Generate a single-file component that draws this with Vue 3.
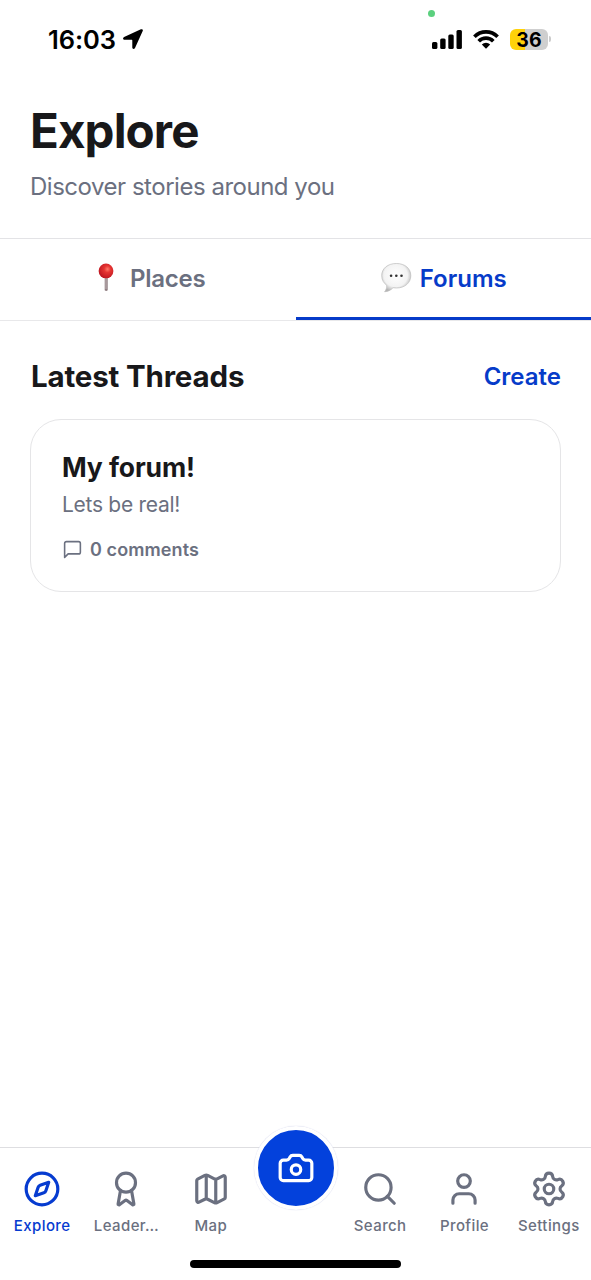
<script setup>
const left = [
  {
    label: 'Explore',
    active: true,
    circle: [12, 12, 10],
    path: 'm16.24 7.76-1.804 5.411a2 2 0 0 1-1.265 1.265L7.76 16.24l1.804-5.411a2 2 0 0 1 1.265-1.265z',
  },
  {
    label: 'Leader…',
    circle: [12, 8, 6],
    path: 'm15.477 12.89 1.515 8.526a.5.5 0 0 1-.81.47l-3.58-2.687a1 1 0 0 0-1.197 0l-3.586 2.686a.5.5 0 0 1-.81-.469l1.514-8.526',
  },
  {
    label: 'Map',
    path: 'M14.106 5.553a2 2 0 0 0 1.788 0l3.659-1.83A1 1 0 0 1 21 4.619v12.764a1 1 0 0 1-.553.894l-4.553 2.277a2 2 0 0 1-1.788 0l-4.212-2.106a2 2 0 0 0-1.788 0l-3.659 1.83A1 1 0 0 1 3 19.381V6.618a1 1 0 0 1 .553-.894l4.553-2.277a2 2 0 0 1 1.788 0zM15 5.764v15M9 3.236v15',
  },
]
const right = [
  { label: 'Search', circle: [11, 11, 8], path: 'm21 21-4.34-4.34' },
  { label: 'Profile', circle: [12, 7, 4], path: 'M19 21v-2a4 4 0 0 0-4-4H9a4 4 0 0 0-4 4v2' },
  {
    label: 'Settings',
    circle: [12, 12, 3],
    path: 'M9.671 4.136a2.34 2.34 0 0 1 4.659 0 2.34 2.34 0 0 0 3.319 1.915 2.34 2.34 0 0 1 2.33 4.033 2.34 2.34 0 0 0 0 3.831 2.34 2.34 0 0 1-2.33 4.033 2.34 2.34 0 0 0-3.319 1.915 2.34 2.34 0 0 1-4.659 0 2.34 2.34 0 0 0-3.32-1.915 2.34 2.34 0 0 1-2.33-4.033 2.34 2.34 0 0 0 0-3.831A2.34 2.34 0 0 1 6.35 6.051a2.34 2.34 0 0 0 3.319-1.915',
  },
]
const tabs = [...left, { camera: true, label: 'camera' }, ...right]
</script>

<template>
  <div class="screen">
    <div class="status">
      <i class="privacy-dot"></i>
      <span class="time">16:03</span>
      <svg class="location" width="20" height="20" viewBox="0 0 20 20">
        <path d="M17.900.3 1.100 8C-.5 8.800-.2 10.700 1.500 10.700h7.300c.3 0 .5.200.5.500v7.300c0 1.700 1.900 2 2.700.4L19.700 2.100C20.300.8 19.200-.3 17.900.3z" />
      </svg>
      <svg class="signal" width="30" height="19" viewBox="0 0 30 19">
        <rect x="0" y="12" width="5.400" height="7" rx="1.500" />
        <rect x="8.200" y="8.500" width="5.400" height="10.500" rx="1.500" />
        <rect x="16.300" y="4.500" width="5.400" height="14.500" rx="1.500" />
        <rect x="24.500" y="0" width="5.400" height="19" rx="1.500" />
      </svg>
      <svg class="wifi" width="26" height="19" viewBox="0 0 26 19">
        <g fill="none" stroke="#000" stroke-width="3.700">
          <path d="M1.400 6.700a16.500 16.500 0 0 1 23.200 0" />
          <path d="M5.700 11.200a10.300 10.300 0 0 1 14.600 0" />
        </g>
        <path d="M8.800 14.500a6 6 0 0 1 8.400 0L13 18.800z" />
      </svg>
      <span class="battery">36</span>
      <i class="battery-tip"></i>
    </div>

    <header class="header">
      <h1>Explore</h1>
      <p>Discover stories around you</p>
    </header>

    <div class="tabs">
      <div class="tab places">
        <svg class="pin" width="32" height="32" viewBox="0 0 32 32">
          <defs>
            <radialGradient id="pinHead" cx=".6" cy=".38" r=".65">
              <stop offset="0" stop-color="#ff7a69" />
              <stop offset=".35" stop-color="#e53432" />
              <stop offset="1" stop-color="#bd1520" />
            </radialGradient>
          </defs>
          <path d="M14.700 14h3v14.200q-1.500 1.600-3 0z" fill="#8f7d81" />
          <path d="M15.500 15h1v12h-1z" fill="#c1b6b8" />
          <circle cx="16" cy="8.900" r="7.400" fill="url(#pinHead)" />
        </svg>
        <span>Places</span>
      </div>
      <div class="tab selected">
        <svg class="bubble" width="32" height="32" viewBox="0 0 32 32">
          <defs>
            <radialGradient id="bubbleFill" cx=".48" cy=".42" r=".58">
              <stop offset="0" stop-color="#fff" />
              <stop offset=".7" stop-color="#f3f3f3" />
              <stop offset="1" stop-color="#b4b4b4" />
            </radialGradient>
          </defs>
          <path d="M16.400 1.500C7.700 1.500 1.700 6.500 1.700 13.600c0 4.600 2.300 7.800 5 9.600.3 2.700-.6 4.700-2.100 6.500 3.100 0 6.200-1.400 8.400-4 1 .2 2.200.3 3.300.3 8.700 0 14.500-5.300 14.500-12.400S25.100 1.500 16.400 1.500z" fill="url(#bubbleFill)" stroke="#bcbcbc" stroke-width=".7" />
          <g fill="#333"><circle cx="11.100" cy="13.800" r="1.300" /><circle cx="16.300" cy="13.800" r="1.300" /><circle cx="21.500" cy="13.800" r="1.300" /></g>
        </svg>
        <span>Forums</span>
      </div>
    </div>

    <main>
      <div class="section-head">
        <h2>Latest Threads</h2>
        <a>Create</a>
      </div>
      <article class="card">
        <h3>My forum!</h3>
        <p>Lets be real!</p>
        <div class="comments">
          <svg class="line" width="21" height="21" viewBox="0 0 24 24">
            <path d="M21 15a2 2 0 0 1-2 2H7l-4 4V5a2 2 0 0 1 2-2h14a2 2 0 0 1 2 2z" />
          </svg>
          <span>0 comments</span>
        </div>
      </article>
    </main>

    <nav>
      <div v-for="tab in tabs" :key="tab.label" class="item" :class="{ active: tab.active }">
        <div v-if="tab.camera" class="camera">
          <svg class="line" width="38" height="38" viewBox="0 0 24 24">
            <path d="M13.997 4a2 2 0 0 1 1.760 1.050l.486.900A2 2 0 0 0 18.003 7H20a2 2 0 0 1 2 2v9a2 2 0 0 1-2 2H4a2 2 0 0 1-2-2V9a2 2 0 0 1 2-2h1.997a2 2 0 0 0 1.759-1.048l.489-.904A2 2 0 0 1 10.004 4z" />
            <circle cx="12" cy="13" r="3" />
          </svg>
        </div>
        <template v-else>
          <svg class="line" width="38" height="38" viewBox="0 0 24 24">
            <circle v-if="tab.circle" :cx="tab.circle[0]" :cy="tab.circle[1]" :r="tab.circle[2]" />
            <path :d="tab.path" />
          </svg>
          <span>{{ tab.label }}</span>
        </template>
      </div>
    </nav>
    <div class="home"><i></i></div>
  </div>
</template>

<style>
body { margin: 0; background: #fff; }
</style>

<style scoped>
* { box-sizing: border-box; }
.screen {
  width: 591px;
  height: 1280px;
  display: flex;
  flex-direction: column;
  background: #fff;
  color: #18181a;
  font-family: Inter, "Liberation Sans", sans-serif;
}
h1, h2, h3, p { margin: 0; white-space: nowrap; }
svg { display: block; flex: none; }
.line { fill: none; stroke: currentColor; stroke-width: 2; stroke-linecap: round; stroke-linejoin: round; }

.status { position: relative; height: 78px; display: flex; align-items: center; padding-left: 48px; color: #000; }
.privacy-dot { position: absolute; left: 428px; top: 10px; width: 7px; height: 7px; border-radius: 50%; background: #5bd07e; }
.time { width: 75px; font-size: 25.5px; font-weight: 600; letter-spacing: -0.1px; }
.signal { margin-left: 289px; }
.wifi { margin-left: 11px; }
.battery {
  margin-left: 11px;
  width: 38px;
  height: 21px;
  border-radius: 6px;
  background: linear-gradient(90deg, #ffd20a 15px, #cfcfcf 15px);
  font-size: 19.5px;
  line-height: 22px;
  font-weight: 700;
  text-align: center;
}
.battery-tip { width: 2px; height: 6px; margin-left: 1px; border-radius: 0 2px 2px 0; background: #cbcbcb; }

.header { height: 161px; padding: 23px 30px 0; border-bottom: 1px solid #e3e3e6; }
h1 { font-size: 47.500px; line-height: 60px; font-weight: 700; letter-spacing: -0.9px; }
.header p { margin-top: 11px; font-size: 24px; line-height: 30px; letter-spacing: -0.48px; color: #6b7080; }

.tabs { height: 82px; display: flex; border-bottom: 1px solid #e8e8ea; }
.tab { flex: 1; display: flex; align-items: center; justify-content: center; gap: 8px; padding-bottom: 3px; font-size: 24px; font-weight: 600; color: #6b7080; }
.places span { letter-spacing: -0.25px; }
.selected { color: #063bc9; border-bottom: 3px solid #063bc9; padding-bottom: 0; }

main { flex: 1; padding: 33px 30px 0 31px; }
.section-head { height: 44px; display: flex; align-items: center; justify-content: space-between; }
h2 { font-size: 29.5px; font-weight: 700; letter-spacing: -0.17px; }
a { font-size: 24px; font-weight: 600; color: #063bc9; }
.card { height: 173px; margin-top: 21px; margin-left: -1px; padding: 30px 31px; border: 1.500px solid #e5e5e7; border-radius: 31px; }
h3 { font-size: 26.5px; line-height: 34px; font-weight: 700; letter-spacing: -0.1px; }
.card p { margin-top: 7px; font-size: 21px; line-height: 28px; letter-spacing: -0.28px; color: #6b7080; }
.comments { display: flex; align-items: center; gap: 7px; margin-top: 18px; height: 24px; color: #6b7080; font-size: 18px; font-weight: 600; letter-spacing: 0.1px; }
.comments svg { stroke-width: 1.800; }

nav { height: 101px; display: grid; grid-template-columns: repeat(7, 1fr); border-top: 1px solid #dedee1; color: #6b7080; }
.item { display: flex; flex-direction: column; align-items: center; padding-top: 22px; font-size: 15px; line-height: 20px; font-weight: 500; letter-spacing: 0.4px; }
.item span { margin-top: 8px; }
.active { color: #063bd0; }
.camera {
  width: 84px;
  height: 84px;
  margin-top: -44px;
  margin-left: 1px;
  border: 4px solid #fff;
  border-radius: 50%;
  background: #0341dc;
  box-shadow: 0 0 1px #b9bde0;
  color: #fff;
  display: flex;
  align-items: center;
  justify-content: center;
}
.home { height: 32px; display: flex; justify-content: center; padding-top: 12px; }
.home i { width: 211px; height: 8px; border-radius: 4px; background: #000; }
</style>
